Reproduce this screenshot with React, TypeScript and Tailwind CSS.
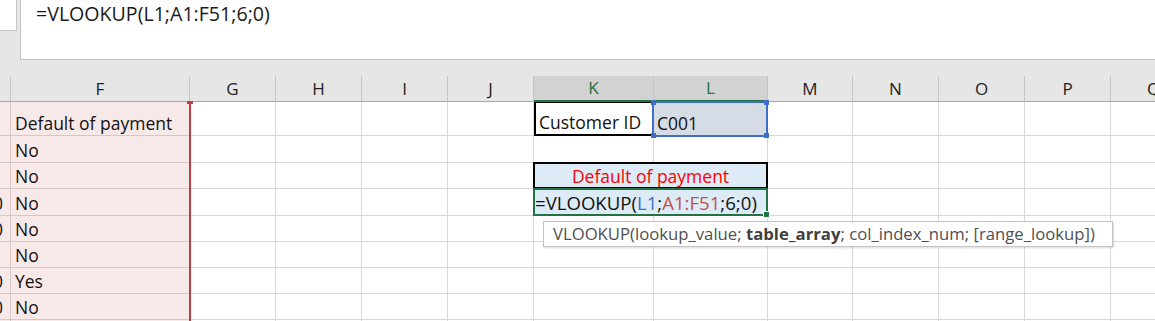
import type { ReactNode } from 'react';

const cols = ['E', 'F', 'G', 'H', 'I', 'J', 'K', 'L', 'M', 'N', 'O', 'P', 'Q'];
const fValues = ['Default of payment', 'No', 'No', 'No', 'No', 'No', 'Yes', 'No', ''];
const eZero = [false, false, false, true, true, false, true, true, false];

function Cell({ children, className = '' }: { children?: ReactNode; className?: string }) {
  return (
    <div className={`flex items-end overflow-hidden whitespace-nowrap border-r border-b border-[#d9d9d9] pb-[2px] leading-[20px] ${className}`}>
      {children}
    </div>
  );
}

function PinkCell({ children, className = '' }: { children?: ReactNode; className?: string }) {
  return (
    <div className={`flex items-end overflow-hidden whitespace-nowrap border-r border-b border-[#d8c6c6] bg-[#f8e9e9] pb-[2px] leading-[20px] ${className}`}>
      {children}
    </div>
  );
}

function Blank({ n }: { n: number }) {
  return (
    <>
      {Array.from({ length: n }).map((_, i) => (
        <Cell key={i} />
      ))}
    </>
  );
}

export default function App() {
  return (
    <div className="relative h-[321px] w-[1155px] overflow-hidden bg-[#e6e6e6] font-['Open_Sans',sans-serif] text-[#111]">
      {/* Formula bar */}
      <div className="flex h-[76px] items-start">
        <div className="h-[31px] w-[17px] border-r border-b border-[#c6c6c6] bg-white" />
        <div className="ml-[3px] h-[60px] flex-1 border-l border-b border-[#c2c2c2] bg-white pl-[15px] pt-[2px] text-[19.6px] leading-[24px] text-[#1a1a1a]">
          =VLOOKUP(L1;A1:F51;6;0)
        </div>
      </div>

      {/* Column headers */}
      <div className="grid h-[26px] grid-cols-[11px_179px_86px_86px_86px_86px_120px_114px_85px_86px_86px_86px_86px] text-[17px]">
        {cols.map((c) => {
          const active = c === 'K' || c === 'L';
          return (
            <div
              key={c}
              className={`flex items-center justify-center overflow-hidden border-r border-[#c4c4c4] ${
                active
                  ? 'border-b-2 border-b-[#217346] bg-[#d2d2d2] text-[#217346]'
                  : 'border-b border-b-[#a8a8a8] text-[#222]'
              }`}
            >
              {c === 'E' ? '' : c}
            </div>
          );
        })}
      </div>

      {/* Sheet body */}
      <div className="relative grid grid-cols-[11px_179px_86px_86px_86px_86px_120px_114px_85px_86px_86px_86px_86px] grid-rows-[34px_27px_26px_27px_26px_26px_26px_26px_1fr] bg-white text-[17.5px]">
        {fValues.map((v, r) => (
          <div key={r} className="contents">
            <PinkCell className="justify-end pr-[7px]">{eZero[r] ? '0' : ''}</PinkCell>
            <PinkCell className="pl-[4px]">{v}</PinkCell>
            <Blank n={4} />
            {r === 0 && (
              <>
                <Cell className="border-t border-l-2 border-b-2 border-t-black border-l-black border-b-black pl-[3px]">Customer ID</Cell>
                <Cell className="bg-[#d6dce5] pl-[3px]">C001</Cell>
              </>
            )}
            {(r === 1 || r > 3) && <Blank n={2} />}
            {r === 2 && (
              <div className="col-span-2 -mt-px -ml-px flex items-end justify-center border-2 border-black bg-[#ddebf7] pb-[1px] leading-[20px] text-[#ff0000]">
                Default of payment
              </div>
            )}
            {r === 3 && (
              <div className="relative col-span-2 -mt-px -ml-px flex items-end border-2 border-[#217346] bg-[#ddebf7] pb-[1px] text-[18.6px] leading-[21px]">
                <span>
                  =VLOOKUP(<span className="text-[#3d6fc5]">L1</span>;<span className="text-[#c0504d]">A1:F51</span>;6;0)
                </span>
                <div className="absolute -right-[4px] -bottom-[4px] h-[7px] w-[7px] border border-white bg-[#217346]" />
              </div>
            )}
            <Blank n={5} />
          </div>
        ))}

        {/* L1 reference highlight */}
        <div className="pointer-events-none absolute top-[-1px] left-[652px] h-[36px] w-[116px] border-2 border-[#3d6fc5]">
          <div className="absolute -top-[3px] -left-[3px] h-[5px] w-[5px] bg-[#3d6fc5]" />
          <div className="absolute -top-[3px] -right-[3px] h-[5px] w-[5px] bg-[#3d6fc5]" />
          <div className="absolute -bottom-[3px] -left-[3px] h-[5px] w-[5px] bg-[#3d6fc5]" />
          <div className="absolute -right-[3px] -bottom-[3px] h-[5px] w-[5px] bg-[#3d6fc5]" />
        </div>

        {/* A1:F51 reference edge */}
        <div className="pointer-events-none absolute top-0 left-[189px] h-full w-[2px] bg-[#c23b3f]" />
        <div className="pointer-events-none absolute top-[-1px] left-[187px] h-[3px] w-[6px] bg-[#c23b3f]" />

        {/* Function tooltip */}
        <div className="absolute top-[119px] left-[543px] flex h-[26px] w-[570px] items-center border border-[#c3c3c3] bg-white pl-[9px] text-[16.7px] whitespace-pre text-[#505050] shadow-[1px_1px_2px_rgba(0,0,0,0.15)]">
          VLOOKUP(lookup_value; <b className="font-bold text-[#404040]">table_array</b>; col_index_num; [range_lookup])
        </div>
      </div>
    </div>
  );
}
